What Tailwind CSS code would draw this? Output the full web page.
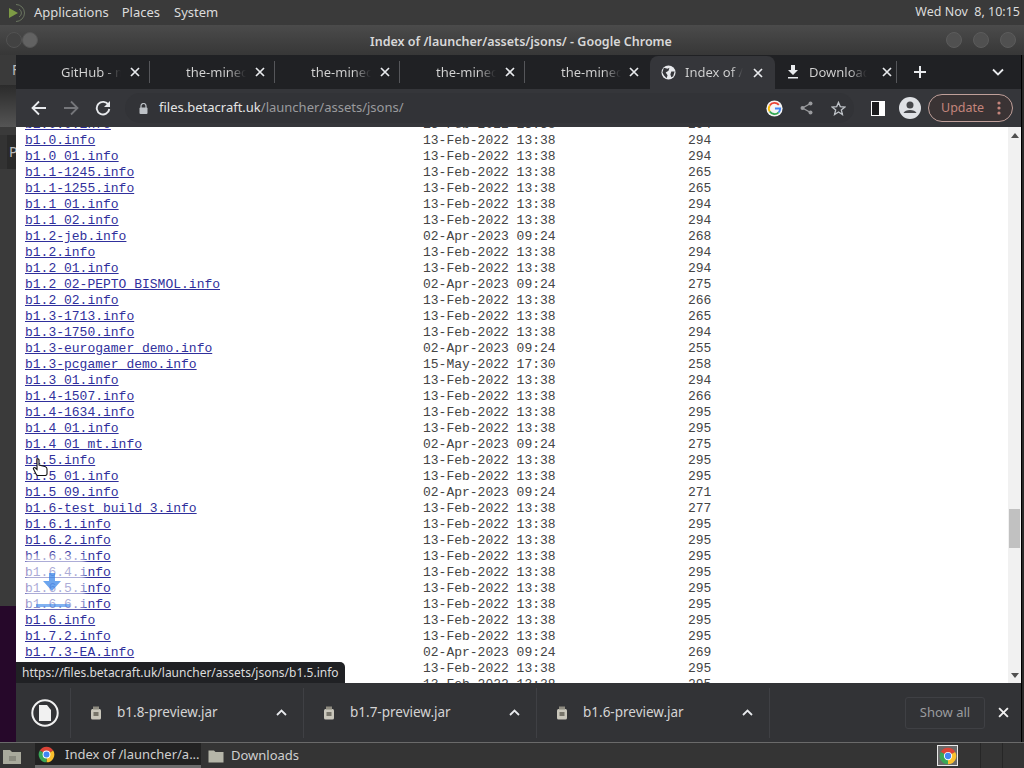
<!DOCTYPE html>
<html lang="en">
<head>
    <meta charset="UTF-8">
    <meta name="viewport" content="width=device-width, initial-scale=1.0">
    <title>Index of /launcher/assets/jsons/</title>
    <script src="https://cdn.jsdelivr.net/npm/@tailwindcss/browser@4"></script>
</head>
<body class="w-[1024px] h-[768px] overflow-hidden flex flex-col bg-[#333333] font-['Noto_Sans',sans-serif]">
    <!-- Desktop top panel -->
    <div class="h-[25px] shrink-0 flex items-center bg-[#3a3a3a] text-[#dcdcdc] text-[13px]">
        <svg class="ml-[7px] w-[20px] h-[20px]" viewBox="0 0 20 20" fill="none">
            <path d="M2 5 L11 10 L2 15 Z" fill="#7d9a45"/>
            <path d="M9 1.5 A8.5 8.5 0 0 1 9 18.5 M12 6 A4.5 4.5 0 0 1 12 14" stroke="#6a7560" stroke-width="1"/>
        </svg>
        <span class="ml-[7px]">Applications</span>
        <span class="ml-[13px]">Places</span>
        <span class="ml-[14px]">System</span>
        <span class="ml-auto mr-[4px] text-[12.5px]">Wed Nov&nbsp; 8, 10:15</span>
    </div>

    <!-- Window title bar -->
    <div class="h-[30px] shrink-0 flex items-center relative bg-linear-to-b from-[#4b4b4b] to-[#373737] pr-[2px]">
        <div class="w-[16px] h-[16px] ml-[6px] rounded-full bg-[#424242] border border-[#525252]"></div>
        <div class="w-[16px] h-[16px] rounded-full bg-[#626262] border border-[#555555]"></div>
        <div class="flex-1 text-center font-semibold text-[12.5px] text-[#d8d8d8] pl-[58px] pt-[5px]">Index of /launcher/assets/jsons/ - Google Chrome</div>
        <div class="w-[16px] h-[16px] mr-[11px] rounded-full bg-[#505050] border border-[#5c5c5c]"></div>
        <div class="w-[16px] h-[16px] mr-[11px] rounded-full bg-[#505050] border border-[#5c5c5c]"></div>
        <div class="w-[16px] h-[16px] mr-[6px] rounded-full bg-[#505050] border border-[#5c5c5c]"></div>
    </div>

    <div class="flex-1 min-h-0 flex">
        <!-- Window behind, left edge -->
        <div class="w-[16px] shrink-0 flex flex-col text-[#bbbbbb] text-[14px]">
            <div class="h-[30px] bg-[#3a3a3a] pl-[12px] leading-[30px]">F</div>
            <div class="h-[42px] bg-linear-to-b from-[#2b2b2b] to-[#555555]"></div>
            <div class="h-[8px] bg-[#3a3a3a]"></div>
            <div class="h-[34px] ml-[7px] bg-[#2a2a2a] pl-[2px] leading-[34px]">P</div>
            <div class="h-[437px] bg-[#3a3a3a]"></div>
            <div class="flex-1 bg-[#26082a]"></div>
        </div>

        <!-- Chrome -->
        <div class="w-[1006px] flex flex-col min-h-0 border-r-[1px] border-black">
            <!-- Tab strip -->
            <div class="h-[34px] shrink-0 flex items-center bg-[#202124] pl-[9px] text-[13px]">
                <div class="w-[125px] h-[34px] flex items-center pl-[36px] relative">
                    <span class="mt-[1px] w-[60px] overflow-hidden whitespace-nowrap text-transparent bg-clip-text bg-linear-to-r from-[#d4d4d4] from-70% to-[#202124]">GitHub - mojang</span>
                    <svg class="ml-[9px] w-[10px] h-[10px]" viewBox="0 0 10 10"><path d="M1 1 L9 9 M9 1 L1 9" stroke="#e8eaed" stroke-width="1.7"/></svg>
                    <div class="absolute right-0 top-[6px] h-[22px] w-px bg-[#55565a]"></div>
                </div>
                <div class="w-[125px] h-[34px] flex items-center pl-[36px] relative">
                    <span class="mt-[1px] w-[60px] overflow-hidden whitespace-nowrap text-transparent bg-clip-text bg-linear-to-r from-[#d4d4d4] from-70% to-[#202124]">the-minecraft</span>
                    <svg class="ml-[9px] w-[10px] h-[10px]" viewBox="0 0 10 10"><path d="M1 1 L9 9 M9 1 L1 9" stroke="#e8eaed" stroke-width="1.7"/></svg>
                    <div class="absolute right-0 top-[6px] h-[22px] w-px bg-[#55565a]"></div>
                </div>
                <div class="w-[125px] h-[34px] flex items-center pl-[36px] relative">
                    <span class="mt-[1px] w-[60px] overflow-hidden whitespace-nowrap text-transparent bg-clip-text bg-linear-to-r from-[#d4d4d4] from-70% to-[#202124]">the-minecraft</span>
                    <svg class="ml-[9px] w-[10px] h-[10px]" viewBox="0 0 10 10"><path d="M1 1 L9 9 M9 1 L1 9" stroke="#e8eaed" stroke-width="1.7"/></svg>
                    <div class="absolute right-0 top-[6px] h-[22px] w-px bg-[#55565a]"></div>
                </div>
                <div class="w-[125px] h-[34px] flex items-center pl-[36px] relative">
                    <span class="mt-[1px] w-[60px] overflow-hidden whitespace-nowrap text-transparent bg-clip-text bg-linear-to-r from-[#d4d4d4] from-70% to-[#202124]">the-minecraft</span>
                    <svg class="ml-[9px] w-[10px] h-[10px]" viewBox="0 0 10 10"><path d="M1 1 L9 9 M9 1 L1 9" stroke="#e8eaed" stroke-width="1.7"/></svg>
                    <div class="absolute right-0 top-[6px] h-[22px] w-px bg-[#55565a]"></div>
                </div>
                <div class="w-[125px] h-[34px] flex items-center pl-[36px]">
                    <span class="mt-[1px] w-[60px] overflow-hidden whitespace-nowrap text-transparent bg-clip-text bg-linear-to-r from-[#d4d4d4] from-70% to-[#202124]">the-minecraft</span>
                    <svg class="ml-[8px] w-[10px] h-[10px]" viewBox="0 0 10 10"><path d="M1 1 L9 9 M9 1 L1 9" stroke="#e8eaed" stroke-width="1.7"/></svg>
                </div>
                <!-- Active tab -->
                <div class="w-[125px] h-[34px] flex items-center pl-[11px] bg-[#35363a] rounded-t-[8px] mt-[1px]">
                    <svg class="w-[15px] h-[15px]" viewBox="0 0 16 16"><circle cx="8" cy="8" r="7.5" fill="#e8eaed"/><path d="M3 3 L7 4 L9 3 L8 6 L5 8 L7 11 L6 14 L3 11 L1.5 8 Z M11 7 L14.5 7 L13 12 L11 13 L10 10 Z" fill="#35363a"/></svg>
                    <span class="ml-[9px] w-[58px] overflow-hidden whitespace-nowrap text-transparent bg-clip-text bg-linear-to-r from-[#d4d4d4] from-80% to-[#35363a]">Index of /launcher</span>
                    <svg class="ml-[10px] w-[10px] h-[10px]" viewBox="0 0 10 10"><path d="M1 1 L9 9 M9 1 L1 9" stroke="#e8eaed" stroke-width="1.7"/></svg>
                </div>
                <div class="w-[125px] h-[34px] flex items-center pl-[12px] relative">
                    <svg class="w-[12px] h-[14px]" viewBox="0 0 12 14"><path d="M4 0 H8 V5 H11 L6 10 L1 5 H4 Z M1 12 H11 V13.5 H1 Z" fill="#e8eaed"/></svg>
                    <span class="mt-[1px] ml-[10px] w-[58px] overflow-hidden whitespace-nowrap text-transparent bg-clip-text bg-linear-to-r from-[#d4d4d4] from-70% to-[#202124]">Downloads</span>
                    <svg class="ml-[15px] w-[10px] h-[10px]" viewBox="0 0 10 10"><path d="M1 1 L9 9 M9 1 L1 9" stroke="#e8eaed" stroke-width="1.7"/></svg>
                    <div class="absolute right-[3px] top-[6px] h-[22px] w-px bg-[#55565a]"></div>
                </div>
                <svg class="ml-[14px] w-[12px] h-[12px]" viewBox="0 0 12 12"><path d="M6 0 V12 M0 6 H12" stroke="#e8eaed" stroke-width="2"/></svg>
                <svg class="ml-[66px] w-[12px] h-[8px]" viewBox="0 0 12 8"><path d="M1 1.5 L6 6.5 L11 1.5" fill="none" stroke="#e8eaed" stroke-width="1.8"/></svg>
            </div>

            <!-- Toolbar -->
            <div class="h-[38px] shrink-0 flex items-center bg-[#35363a]">
                <svg class="ml-[15px] w-[16px] h-[16px]" viewBox="0 0 16 16"><path d="M15 8 H2 M8 1.5 L1.5 8 L8 14.5" fill="none" stroke="#e8eaed" stroke-width="1.8"/></svg>
                <svg class="ml-[16px] w-[16px] h-[16px]" viewBox="0 0 16 16"><path d="M1 8 H14 M8 1.5 L14.5 8 L8 14.5" fill="none" stroke="#75767a" stroke-width="1.8"/></svg>
                <svg class="ml-[16px] w-[16px] h-[16px]" viewBox="0 0 16 16"><path d="M13.5 5 A6.3 6.3 0 1 0 14.3 9" fill="none" stroke="#e8eaed" stroke-width="1.9"/><path d="M15 1 V7 H9 Z" fill="#e8eaed"/></svg>
                <div class="ml-[14px] w-[729px] h-[30px] flex items-center rounded-full bg-[#323337]">
                    <svg class="ml-[14px] w-[9px] h-[11px]" viewBox="0 0 9 11"><path d="M2 5 V3 A2.5 2.5 0 0 1 7 3 V5" fill="none" stroke="#bdc1c6" stroke-width="1.2"/><rect x="0.5" y="4.5" width="8" height="6.5" rx="1" fill="#bdc1c6"/></svg>
                    <span class="ml-[11px] -mt-[1px] text-[13px] text-[#e4e4e4]">files.betacraft.uk<span class="text-[#9a9b9e]">/launcher/assets/jsons/</span></span>
                    <svg class="ml-auto mr-[8px] w-[17px] h-[17px]" viewBox="0 0 18 18">
                        <circle cx="9" cy="9" r="8.6" fill="#f4f4f4"/>
                        <path d="M13.6 5.2 A6 6 0 0 0 4 5.8" fill="none" stroke="#ea4335" stroke-width="2"/>
                        <path d="M4 5.8 A6 6 0 0 0 4 12.2" fill="none" stroke="#fbbc05" stroke-width="2"/>
                        <path d="M4 12.2 A6 6 0 0 0 13.4 13" fill="none" stroke="#34a853" stroke-width="2"/>
                        <path d="M13.4 13 A6 6 0 0 0 15 9 H9.5" fill="none" stroke="#4285f4" stroke-width="2"/>
                    </svg>
                    <svg class="ml-[9px] w-[13px] h-[14px]" viewBox="0 0 13 14"><path d="M10.5 2.5 L2.5 7 L10.5 11.5" fill="none" stroke="#9a9b9e" stroke-width="1.4"/><circle cx="10.5" cy="2.5" r="2" fill="#9a9b9e"/><circle cx="2.5" cy="7" r="2" fill="#9a9b9e"/><circle cx="10.5" cy="11.5" r="2" fill="#9a9b9e"/></svg>
                    <svg class="ml-[18px] mr-[8px] w-[15px] h-[15px]" viewBox="0 0 16 16"><path d="M8 1.5 L9.9 6 L14.8 6.4 L11 9.6 L12.2 14.4 L8 11.8 L3.8 14.4 L5 9.6 L1.2 6.4 L6.1 6 Z" fill="none" stroke="#bdc1c6" stroke-width="1.4"/></svg>
                </div>
                <div class="ml-[17px] w-[14px] h-[15px] bg-white border-[1.5px] border-white flex"><div class="w-[7px] h-full bg-[#1c1c1e]"></div></div>
                <svg class="ml-[14px] w-[22px] h-[22px]" viewBox="0 0 22 22"><circle cx="11" cy="11" r="11" fill="#dfe1e5"/><circle cx="11" cy="8" r="3.5" fill="#46474b"/><path d="M4.5 16 C6 12 16 12 17.5 16 Z" fill="#46474b"/></svg>
                <div class="ml-[7px] w-[85px] h-[28px] flex items-center rounded-full border border-[#c0a09a] bg-[#3a3334] text-[#c4857c] text-[12.5px] pl-[12px]">
                    <span>Update</span>
                    <svg class="ml-[13px] w-[4px] h-[14px]" viewBox="0 0 4 14"><circle cx="2" cy="2" r="1.6" fill="#c4857c"/><circle cx="2" cy="7" r="1.6" fill="#c4857c"/><circle cx="2" cy="12" r="1.6" fill="#c4857c"/></svg>
                </div>
            </div>

            <!-- Page -->
            <div class="flex-1 min-h-0 flex bg-white relative overflow-hidden">
                <div class="flex-1 min-w-0 pl-[9px] -mt-[10px]">
                    <div class="grid grid-cols-[398px_265px_auto] auto-rows-[16px] leading-[16px] text-[13px] text-[#444444] font-['Liberation_Mono',monospace] whitespace-pre">
                        <a class="text-[#30309c] underline">b1.0.0.info</a><span>13-Feb-2022 13:38</span><span>294</span>
                        <a class="text-[#30309c] underline">b1.0.info</a><span>13-Feb-2022 13:38</span><span>294</span>
                        <a class="text-[#30309c] underline">b1.0_01.info</a><span>13-Feb-2022 13:38</span><span>294</span>
                        <a class="text-[#30309c] underline">b1.1-1245.info</a><span>13-Feb-2022 13:38</span><span>265</span>
                        <a class="text-[#30309c] underline">b1.1-1255.info</a><span>13-Feb-2022 13:38</span><span>265</span>
                        <a class="text-[#30309c] underline">b1.1_01.info</a><span>13-Feb-2022 13:38</span><span>294</span>
                        <a class="text-[#30309c] underline">b1.1_02.info</a><span>13-Feb-2022 13:38</span><span>294</span>
                        <a class="text-[#30309c] underline">b1.2-jeb.info</a><span>02-Apr-2023 09:24</span><span>268</span>
                        <a class="text-[#30309c] underline">b1.2.info</a><span>13-Feb-2022 13:38</span><span>294</span>
                        <a class="text-[#30309c] underline">b1.2_01.info</a><span>13-Feb-2022 13:38</span><span>294</span>
                        <a class="text-[#30309c] underline">b1.2_02-PEPTO_BISMOL.info</a><span>02-Apr-2023 09:24</span><span>275</span>
                        <a class="text-[#30309c] underline">b1.2_02.info</a><span>13-Feb-2022 13:38</span><span>266</span>
                        <a class="text-[#30309c] underline">b1.3-1713.info</a><span>13-Feb-2022 13:38</span><span>265</span>
                        <a class="text-[#30309c] underline">b1.3-1750.info</a><span>13-Feb-2022 13:38</span><span>294</span>
                        <a class="text-[#30309c] underline">b1.3-eurogamer_demo.info</a><span>02-Apr-2023 09:24</span><span>255</span>
                        <a class="text-[#30309c] underline">b1.3-pcgamer_demo.info</a><span>15-May-2022 17:30</span><span>258</span>
                        <a class="text-[#30309c] underline">b1.3_01.info</a><span>13-Feb-2022 13:38</span><span>294</span>
                        <a class="text-[#30309c] underline">b1.4-1507.info</a><span>13-Feb-2022 13:38</span><span>266</span>
                        <a class="text-[#30309c] underline">b1.4-1634.info</a><span>13-Feb-2022 13:38</span><span>295</span>
                        <a class="text-[#30309c] underline">b1.4_01.info</a><span>13-Feb-2022 13:38</span><span>295</span>
                        <a class="text-[#30309c] underline">b1.4_01_mt.info</a><span>02-Apr-2023 09:24</span><span>275</span>
                        <a class="text-[#30309c] underline">b1.5.info</a><span>13-Feb-2022 13:38</span><span>295</span>
                        <a class="text-[#30309c] underline">b1.5_01.info</a><span>13-Feb-2022 13:38</span><span>295</span>
                        <a class="text-[#30309c] underline">b1.5_09.info</a><span>02-Apr-2023 09:24</span><span>271</span>
                        <a class="text-[#30309c] underline">b1.6-test_build_3.info</a><span>13-Feb-2022 13:38</span><span>277</span>
                        <a class="text-[#30309c] underline">b1.6.1.info</a><span>13-Feb-2022 13:38</span><span>295</span>
                        <a class="text-[#30309c] underline">b1.6.2.info</a><span>13-Feb-2022 13:38</span><span>295</span>
                        <a class="text-[#30309c] underline">b1.6.3.info</a><span>13-Feb-2022 13:38</span><span>295</span>
                        <a class="text-[#30309c] underline">b1.6.4.info</a><span>13-Feb-2022 13:38</span><span>295</span>
                        <a class="text-[#30309c] underline">b1.6.5.info</a><span>13-Feb-2022 13:38</span><span>295</span>
                        <a class="text-[#30309c] underline">b1.6.6.info</a><span>13-Feb-2022 13:38</span><span>295</span>
                        <a class="text-[#30309c] underline">b1.6.info</a><span>13-Feb-2022 13:38</span><span>295</span>
                        <a class="text-[#30309c] underline">b1.7.2.info</a><span>13-Feb-2022 13:38</span><span>295</span>
                        <a class="text-[#30309c] underline">b1.7.3-EA.info</a><span>02-Apr-2023 09:24</span><span>269</span>
                        <a class="text-[#30309c] underline">b1.7.3.info</a><span>13-Feb-2022 13:38</span><span>295</span>
                        <a class="text-[#30309c] underline">b1.7.info</a><span>13-Feb-2022 13:38</span><span>295</span>
                    </div>
                </div>

                <!-- Scrollbar -->
                <div class="w-[13px] shrink-0 flex flex-col items-center bg-[#f1f1f1]">
                    <div class="mt-[6px] w-0 h-0 border-x-[4px] border-x-transparent border-b-[5px] border-b-[#505050]"></div>
                    <div class="mt-[371px] w-[11px] h-[39px] bg-[#c1c1c1]"></div>
                    <div class="mt-[125px] w-0 h-0 border-x-[4px] border-x-transparent border-t-[5px] border-t-[#505050]"></div>
                </div>

                <!-- Download drag preview over the list -->
                <div class="absolute left-[9px] top-[428px] w-[60px] h-[54px] bg-white/60 blur-[2px]"></div>
                <svg class="absolute left-[27px] top-[446px] w-[18px] h-[36px] opacity-70" viewBox="0 0 18 36"><path d="M6 0 H12 V8 H18 L9 18 L0 8 H6 Z" fill="#2f7fe8"/></svg>
                <div class="absolute left-[20px] top-[477px] w-[34px] h-[3px] bg-[#2f7fe8]/60"></div>

                <!-- Hand cursor -->
                <svg class="absolute left-[16px] top-[331px] w-[16px] h-[18px]" viewBox="0 0 16 18"><path d="M5 1 C6 0.5 7 1 7 2 V7 L13 8.5 C14.5 9 15 10 15 11 V16 C15 17 14 17.5 13 17.5 H6 C5 17.5 4.5 17 4 16 L1.5 11 C1 10 2.5 9 3.5 10 L5 11.5 Z" fill="#ffffff" stroke="#111111" stroke-width="1.1"/></svg>

                <!-- Link status bubble -->
                <div class="absolute left-0 bottom-0 h-[21px] pl-[6px] pr-[6px] flex items-center bg-[#202124] rounded-tr-[5px] text-[12px] text-[#dcdcdc]">https://files.betacraft.uk/launcher/assets/jsons/b1.5.info</div>
            </div>

            <!-- Download bar -->
            <div class="h-[59px] shrink-0 flex items-center bg-[#323336] text-[13.5px] text-[#d4d4d4]">
                <div class="w-[55px] h-[50px] flex items-center justify-center border-r border-[#3f4044]">
                    <svg class="w-[28px] h-[28px] ml-[3px]" viewBox="0 0 28 28"><circle cx="14" cy="14" r="12.7" fill="none" stroke="#f1f1f1" stroke-width="2"/><path d="M8 6 H16 L20 11 V22 H8 Z" fill="#f1f1f1"/></svg>
                </div>
                <div class="w-[233px] h-[50px] flex items-center pl-[19px] border-r border-[#3f4044]">
                    <svg class="w-[12px] h-[14px]" viewBox="0 0 12 14"><rect x="1" y="3" width="10" height="10.5" rx="1.5" fill="#c9c6bb"/><rect x="3" y="0.5" width="6" height="3" fill="#8e8b80"/><rect x="3.5" y="6" width="5" height="4" fill="#77746a"/></svg>
                    <span class="ml-[15px] w-[150px]">b1.8-preview.jar</span>
                    <svg class="ml-[9px] w-[11px] h-[7px]" viewBox="0 0 11 7"><path d="M1 6 L5.5 1.5 L10 6" fill="none" stroke="#e8eaed" stroke-width="1.8"/></svg>
                </div>
                <div class="w-[233px] h-[50px] flex items-center pl-[19px] border-r border-[#3f4044]">
                    <svg class="w-[12px] h-[14px]" viewBox="0 0 12 14"><rect x="1" y="3" width="10" height="10.5" rx="1.5" fill="#c9c6bb"/><rect x="3" y="0.5" width="6" height="3" fill="#8e8b80"/><rect x="3.5" y="6" width="5" height="4" fill="#77746a"/></svg>
                    <span class="ml-[15px] w-[150px]">b1.7-preview.jar</span>
                    <svg class="ml-[9px] w-[11px] h-[7px]" viewBox="0 0 11 7"><path d="M1 6 L5.5 1.5 L10 6" fill="none" stroke="#e8eaed" stroke-width="1.8"/></svg>
                </div>
                <div class="w-[233px] h-[50px] flex items-center pl-[19px] border-r border-[#3f4044]">
                    <svg class="w-[12px] h-[14px]" viewBox="0 0 12 14"><rect x="1" y="3" width="10" height="10.5" rx="1.5" fill="#c9c6bb"/><rect x="3" y="0.5" width="6" height="3" fill="#8e8b80"/><rect x="3.5" y="6" width="5" height="4" fill="#77746a"/></svg>
                    <span class="ml-[15px] w-[150px]">b1.6-preview.jar</span>
                    <svg class="ml-[9px] w-[11px] h-[7px]" viewBox="0 0 11 7"><path d="M1 6 L5.5 1.5 L10 6" fill="none" stroke="#e8eaed" stroke-width="1.8"/></svg>
                </div>
                <div class="ml-auto w-[80px] h-[32px] flex items-center justify-center rounded-[3px] border border-[#3f4044] text-[#9a9b9e] text-[13px]">Show all</div>
                <svg class="ml-[13px] mr-[12px] w-[11px] h-[11px]" viewBox="0 0 10 10"><path d="M1 1 L9 9 M9 1 L1 9" stroke="#f1f1f1" stroke-width="1.7"/></svg>
            </div>
        </div>
        <div class="flex-1 bg-[#2a2a2a]"></div>
    </div>

    <!-- Taskbar -->
    <div class="h-[26px] shrink-0 flex items-center bg-[#343434] border-t border-[#6a6a6a] text-[13.5px] text-[#cfcfcf]">
        <svg class="ml-[2px] w-[20px] h-[18px]" viewBox="0 0 20 18"><path d="M1 3 H8 L10 5 H19 V17 H1 Z" fill="#a9aa9c"/><rect x="7" y="9" width="7" height="5" fill="#8a8b7f"/></svg>
        <div class="ml-[13px] w-[166px] h-[25px] flex items-center bg-[#222222] border-b-[3px] border-[#6c6c6c]">
            <svg class="ml-[3px] w-[17px] h-[17px]" viewBox="0 0 24 24">
                <path d="M12 12 L2.47 6.5 A11 11 0 0 1 21.53 6.5 Z" fill="#db4437"/>
                <path d="M12 12 L21.53 6.5 A11 11 0 0 1 12 23 Z" fill="#fbc02d"/>
                <path d="M12 12 L12 23 A11 11 0 0 1 2.47 6.5 Z" fill="#3aa757"/>
                <circle cx="12" cy="12" r="5.5" fill="#ffffff"/><circle cx="12" cy="12" r="4.2" fill="#4285f4"/>
            </svg>
            <span class="ml-[10px] mt-[2px] text-[13px] whitespace-nowrap">Index of /launcher/a...</span>
        </div>
        <svg class="ml-[7px] w-[16px] h-[14px]" viewBox="0 0 16 14"><path d="M0.5 1.5 H6 L7.5 3 H15.5 V13.5 H0.5 Z" fill="#b5b5a8"/></svg>
        <span class="ml-[7px] mt-[1px] text-[13px]">Downloads</span>
        <div class="ml-auto w-[21px] h-[21px] flex items-center justify-center bg-[#6a6a6a] border border-[#e8e8e8]">
            <svg class="w-[18px] h-[18px]" viewBox="0 0 24 24">
                <path d="M12 12 L2.47 6.5 A11 11 0 0 1 21.53 6.5 Z" fill="#db4437"/>
                <path d="M12 12 L21.53 6.5 A11 11 0 0 1 12 23 Z" fill="#fbc02d"/>
                <path d="M12 12 L12 23 A11 11 0 0 1 2.47 6.5 Z" fill="#3aa757"/>
                <circle cx="12" cy="12" r="5.5" fill="#ffffff"/><circle cx="12" cy="12" r="4.2" fill="#4285f4"/>
            </svg>
        </div>
        <div class="ml-[22px] w-px h-[25px] bg-[#262626]"></div>
        <div class="ml-[21px] mr-[21px] w-px h-[25px] bg-[#262626]"></div>
    </div>
</body>
</html>
